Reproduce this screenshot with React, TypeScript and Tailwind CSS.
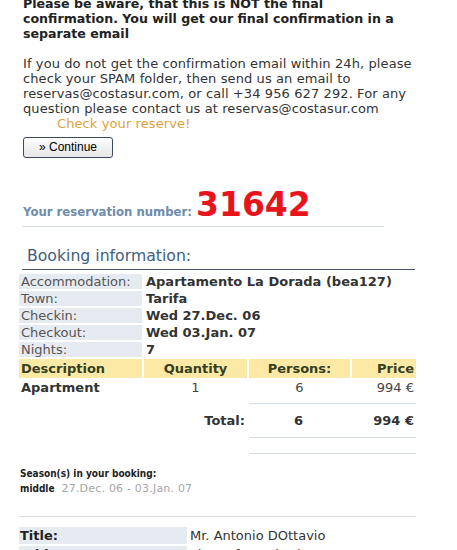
import React from "react";

const font = "font-['DejaVu_Sans',Verdana,sans-serif]";

function Row({ label, value }: { label: string; value: string }) {
  return (
    <div className="flex gap-[2px] h-[17px] pb-[2px]">
      <div className="w-[123px] bg-[#e6ebf2] pl-[2px] text-[13px] leading-[15px] text-[#555]">{label}</div>
      <div className="flex-1 pl-[2px] text-[13px] leading-[15px] font-bold text-[#333]">{value}</div>
    </div>
  );
}

export default function App() {
  return (
    <div className={`w-[457px] h-[550px] overflow-hidden bg-white ${font} text-[#333]`}>
      <div className="pl-[23px] -mt-[4px]">
        <p className="font-bold text-[12.6px] leading-[15px] text-[#222] whitespace-nowrap">
          Please be aware, that this is NOT the final
          <br />
          confirmation. You will get our final confirmation in a
          <br />
          separate email
        </p>
        <p className="mt-[15px] text-[13px] tracking-[0.1px] leading-[15px] text-[#333] whitespace-nowrap">
          If you do not get the confirmation email within 24h, please
          <br />
          check your SPAM folder, then send us an email to
          <br />
          reservas@costasur.com, or call +34 956 627 292. For any
          <br />
          question please contact us at reservas@costasur.com
        </p>
        <p className="pl-[34px] text-[13px] tracking-[0.1px] leading-[15px] text-[#e0a23a]">Check your reserve!</p>
        <button className="mt-[6px] w-[90px] h-[21px] rounded-[3px] border border-[#3c4a5c] bg-gradient-to-b from-[#fdfdfd] to-[#e6e6e6] font-['Liberation_Sans',Arial,sans-serif] text-[12px] text-black leading-[19px] flex items-center justify-center">
          » Continue
        </button>
      </div>

      <div className="ml-[22px] w-[362px] mt-[33px] border-b border-[#d3dbe3] flex items-end pb-[7px]">
        <span className="text-[11.7px] font-bold text-[#6e8cab] leading-[14px] pl-[1px]">Your reservation number:</span>
        <span className="ml-[4px] text-[33px] font-bold text-[#e8141c] leading-[28px]">31642</span>
      </div>

      <div className="ml-[22px] w-[393px] mt-[20px] border-b border-[#4a5766] pb-[4px] pl-[5px] text-[15.7px] leading-[18px] text-[#40607e]">
        Booking information:
      </div>

      <div className="ml-[19px] w-[397px] mt-[4px]">
        <Row label="Accommodation:" value="Apartamento La Dorada (bea127)" />
        <Row label="Town:" value="Tarifa" />
        <Row label="Checkin:" value="Wed 27.Dec. 06" />
        <Row label="Checkout:" value="Wed 03.Jan. 07" />
        <Row label="Nights:" value="7" />

        <div className="flex gap-[2px] h-[19px] text-[13px] leading-[19px] font-bold text-[#33401f]">
          <div className="w-[123px] bg-[#fde9a6] pl-[2px]">Description</div>
          <div className="w-[103px] bg-[#fde9a6] text-center">Quantity</div>
          <div className="w-[101px] bg-[#fde9a6] text-center">Persons:</div>
          <div className="flex-1 bg-[#fde9a6] text-right pr-[2px]">Price</div>
        </div>
        <div className="flex gap-[2px] h-[20px] text-[13px] leading-[20px] text-[#444]">
          <div className="w-[123px] pl-[2px] font-bold text-[#333]">Apartment</div>
          <div className="w-[103px] text-center">1</div>
          <div className="w-[101px] text-center">6</div>
          <div className="flex-1 text-right pr-[2px]">994 €</div>
        </div>

        <div className="flex mt-[5px]">
          <div className="w-[230px]" />
          <div className="flex-1 border-t border-[#d3dbe3]" />
        </div>
        <div className="flex gap-[2px] h-[33px] text-[13px] leading-[33px] font-bold text-[#333]">
          <div className="w-[226px] text-right">Total:</div>
          <div className="w-[103px] text-center">6</div>
          <div className="flex-1 text-right pr-[2px]">994 €</div>
        </div>
        <div className="flex">
          <div className="w-[230px]" />
          <div className="flex-1 border-t border-[#d3dbe3] h-[16px]" />
        </div>
        <div className="flex">
          <div className="w-[230px]" />
          <div className="flex-1 border-t border-[#d3dbe3]" />
        </div>

        <div className="mt-[12px] pl-[1px] font-['DejaVu_Sans_Condensed','DejaVu_Sans',sans-serif]">
          <div className="text-[10px] leading-[15px] font-bold text-[#222]">Season(s) in your booking:</div>
          <div className="text-[10px] leading-[16px] whitespace-nowrap">
            <span className="font-bold text-[#222]">middle</span>
            <span className={`ml-[7px] text-[11px] tracking-[0.2px] text-[#a5a5a5] ${font}`}>27.Dec. 06 - 03.Jan. 07</span>
          </div>
        </div>

        <div className="mt-[19px] border-t border-[#d6dce2]" />

        <div className="mt-[10px] flex gap-[2px] h-[19px] pb-[2px] text-[13px] leading-[17px]">
          <div className="w-[168px] bg-[#e6ebf2] pl-[1px] font-bold text-[#222]">Title:</div>
          <div className="flex-1 pl-[1px] text-[#333]">Mr. Antonio DOttavio</div>
        </div>
        <div className="flex gap-[2px] h-[17px] text-[13px] leading-[17px]">
          <div className="w-[168px] bg-[#e6ebf2] pl-[1px] font-bold text-[#222]">Address:</div>
          <div className="flex-1 pl-[1px] text-[#333]">via Stefano Pittaluga 5</div>
        </div>
      </div>
    </div>
  );
}
